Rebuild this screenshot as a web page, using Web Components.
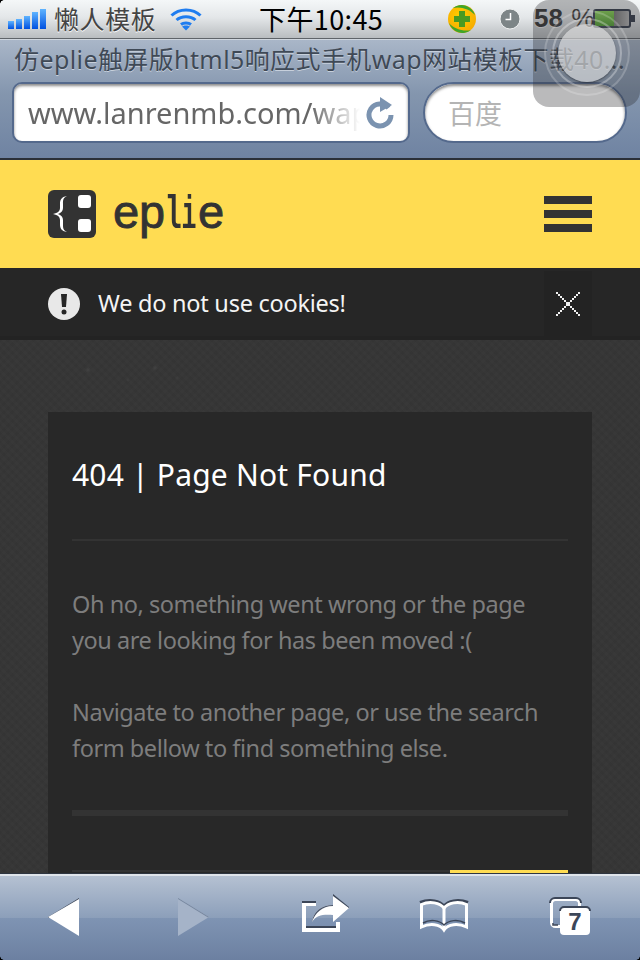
<!DOCTYPE html>
<html lang="zh"><head><meta charset="utf-8"><title>eplie</title>
<style>
html,body{margin:0;padding:0;background:#333}
body{font-family:"Noto Sans","Noto Sans CJK SC",sans-serif}
#phone{position:relative;width:640px;height:960px;overflow:hidden;display:flex;flex-direction:column}
</style></head><body>
<div id="phone">
<ios-status></ios-status>
<safari-bar page-title="仿eplie触屏版html5响应式手机wap网站模板下载40..." url="www.lanrenmb.com/wap" search="百度"></safari-bar>
<page-view>
  <site-header></site-header>
  <notice-bar>We do not use cookies!</notice-bar>
  <error-card heading="404 | Page Not Found">
    <p>Oh no, something went wrong or the page<br>you are looking for has been moved :(</p>
    <p>Navigate to another page, or use the search<br>form bellow to find something else.</p>
  </error-card>
</page-view>
<safari-toolbar></safari-toolbar>
<assistive-touch></assistive-touch>
</div>
<script>
function def(name,html){
  customElements.define(name,class extends HTMLElement{
    constructor(){super();const r=this.attachShadow({mode:'open'});r.innerHTML=html;}
    connectedCallback(){const r=this.shadowRoot;r.querySelectorAll('[data-attr]').forEach(e=>{e.textContent=this.getAttribute(e.dataset.attr)||''})}
  });
}
let xSquares='';
for(let i=0;i<12;i++){xSquares+=`M${i*2} ${i*2}h2v2h-2zM${22-i*2} ${i*2}h2v2h-2z`;}
def('ios-status',`<style>
:host{display:flex;align-items:center;height:39px;flex:none;position:relative;box-sizing:border-box;border-bottom:1px solid #5f6469;
background:linear-gradient(#f4f7f8,#e4e7e9 45%,#b9bdc0);font-family:"Noto Sans CJK SC",sans-serif}
:host::before{content:"";position:absolute;left:0;top:0;width:4px;height:4px;background:radial-gradient(circle at 100% 100%,transparent 3.500px,#000 4px)}
.sig{margin-left:8px;flex:none;display:block}
.car{margin-left:8px;font-size:25px;letter-spacing:.6px;color:#444;text-shadow:0 1px 0 #fff;line-height:35px;padding-bottom:2px;white-space:nowrap;width:108px}
.wifi{margin-left:8px;flex:none}
.time{margin-left:57px;font-size:27px;letter-spacing:.4px;color:#000;width:188px;white-space:nowrap;line-height:35px;padding-bottom:2px;font-family:"Noto Sans CJK SC",sans-serif}
.pct{font-family:"Liberation Sans",sans-serif;font-weight:700;font-size:26px;line-height:37px;padding-bottom:2px;color:#3c3c3c;text-shadow:0 1px 0 #eee;margin-left:13px;width:60px;white-space:nowrap}
.pct i{font-style:normal;font-weight:400;margin-left:1px}
svg{display:block;flex:none}
</style>
<svg class="sig" width="38" height="22" viewBox="0 0 38 22"><defs><linearGradient id="b" x1="0" y1="0" x2="0" y2="1"><stop offset="0" stop-color="#5fb4ff"/><stop offset="1" stop-color="#0050e0"/></linearGradient></defs>
<rect x="0" y="13" width="6" height="8" fill="url(#b)"/><rect x="8" y="11" width="6" height="10" fill="url(#b)"/><rect x="16" y="8" width="6" height="13" fill="url(#b)"/><rect x="24" y="4" width="6" height="17" fill="url(#b)"/><rect x="32" y="1" width="6" height="20" fill="url(#b)"/></svg>
<span class="car">懒人模板</span>
<svg class="wifi" width="32" height="24" viewBox="0 0 32 24" fill="none" stroke="#1f7df0" stroke-width="3"><path d="M1.500 8.500C9 1 23 1 30.500 8.500"/><path d="M6.500 13C11.500 8.500 20.500 8.500 25.500 13"/><path d="M11 17.500C13.500 15.500 18.500 15.500 21 17.500"/><path d="M16 23.500l-4-4c2-1.500 6-1.500 8 0z" fill="#1f7df0" stroke="none"/></svg>
<span class="time">下午10:45</span>
<svg width="30" height="30" viewBox="0 0 30 30"><defs><radialGradient id="y" cx=".45" cy=".4" r=".65"><stop offset="0" stop-color="#ffd000"/><stop offset="1" stop-color="#f6a800"/></radialGradient></defs><circle cx="15" cy="15" r="14" fill="url(#y)"/><path d="M2 19a14 14 0 0 0 22 7c-7 2-17-1-22-7z" fill="#3fa52a"/><path d="M28 11A14 14 0 0 0 6 4c7-2 17 1 22 7z" fill="#3fa52a"/><path d="M12 7h6v5h5v6h-5v5h-6v-5H7v-6h5z" fill="#4a9a22"/></svg>
<svg style="margin-left:22px;margin-bottom:1px" width="22" height="22" viewBox="0 0 22 22"><circle cx="11" cy="11" r="10" fill="#7d8587" stroke="#eef0f0" stroke-width="1"/><path d="M11.500 5v6.500H6.500" fill="none" stroke="#fff" stroke-width="1.500"/></svg>
<span class="pct">58<i> %</i></span>
<svg width="42" height="19" viewBox="0 0 42 19" style="margin-left:-1px;margin-bottom:2px"><defs><linearGradient id="g" x1="0" x2="0" y1="0" y2="1"><stop offset="0" stop-color="#8fd85c"/><stop offset="1" stop-color="#4d9c2f"/></linearGradient><linearGradient id="d" x1="0" x2="1" y1="0" y2="0"><stop offset="0" stop-color="#333"/><stop offset="1" stop-color="#bbb"/></linearGradient></defs><rect x="1" y="1" width="36" height="17" rx="2" fill="url(#d)" stroke="#3a4250" stroke-width="2"/><rect x="2" y="2" width="19" height="15" fill="url(#g)"/><rect x="38" y="6" width="4" height="7" fill="#3a4250"/></svg>`);
def('safari-bar',`<style>
:host{display:block;flex:none;height:121px;box-sizing:border-box;position:relative;border-top:1px solid #cfd6de;border-bottom:2px solid #2b3038;
background:linear-gradient(#a9b6c8,#8496ae 45%,#6f83a2);font-family:"Liberation Sans","Noto Sans CJK SC",sans-serif}
.title{height:42px;line-height:39px;padding:0 14px;color:#3f4956;text-shadow:0 1px 0 #c7d0dc;white-space:nowrap;overflow:hidden;font-family:"Noto Sans","Noto Sans CJK SC",sans-serif;font-size:25px;letter-spacing:.4px}
.row{display:flex;gap:13px;padding:0 12px;align-items:center}
.url,.search{box-sizing:border-box;height:61px;background:#fff;border:2px solid #54698c;box-shadow:inset 0 2px 3px #8a8a8a;display:flex;align-items:center;overflow:hidden;flex:none}
.url{width:398px;border-radius:10px;padding:0 12px 0 14px;position:relative}
.url span{font-family:"Noto Sans","DejaVu Sans",sans-serif;font-size:29px;color:#666;white-space:nowrap;width:332px;
-webkit-mask-image:linear-gradient(90deg,#000 85%,transparent 100%);mask-image:linear-gradient(90deg,#000 85%,transparent 100%)}
.url svg{margin-left:6px;flex:none}
.search{width:204px;border-radius:31px;padding-left:23px;font-family:"Noto Sans CJK SC",sans-serif;font-size:27px;color:#b4b4b4}
</style>
<div class="title" data-attr="page-title"></div>
<div class="row"><div class="url"><span data-attr="url"></span>
<svg width="28" height="32" viewBox="0 0 28 32" fill="none"><path d="M22.500 11A11 11 0 1 0 25 18" stroke="#7b93b0" stroke-width="5"/><path d="M14 0l12 8-12 7z" fill="#7b93b0"/></svg></div>
<div class="search" data-attr="search"></div></div>`);
def('page-view',`<style>
:host{display:block;flex:1;min-height:0;overflow:hidden;
background-color:#363636;
background-image:
 radial-gradient(circle 3px at 88px 30px,#434343,transparent),
 radial-gradient(circle 3px at 155px 28px,#424242,transparent),
 radial-gradient(circle 2px at 128px 40px,#3e3e3e,transparent),
 radial-gradient(circle 2px at 177px 38px,#3e3e3e,transparent),
 repeating-linear-gradient(45deg,rgba(255,255,255,.012) 0 3px,transparent 3px 6px),
 repeating-linear-gradient(-45deg,rgba(0,0,0,.03) 0 3px,transparent 3px 6px);
background-position:0 180px,0 180px,0 180px,0 180px,0 0,0 0;background-repeat:no-repeat,no-repeat,no-repeat,no-repeat,repeat,repeat}
</style><slot></slot>`);
def('site-header',`<style>
:host{display:flex;align-items:center;height:108px;padding:0 48px;background:#ffdc52}
.logo{display:flex;align-items:center;gap:16px;flex:1}
.word{display:flex;font-family:"Liberation Mono",monospace;font-size:47px;color:#333;-webkit-text-stroke:.9px #333;line-height:48px;white-space:nowrap;margin-top:3px}
.word b{display:block;font-weight:400}
.e1{width:26px;letter-spacing:-2.300px}.p{width:27px;letter-spacing:-1.300px}
.l{width:17px;transform:scaleX(.6);font-weight:700!important;-webkit-text-stroke:0;margin-left:-5.600px;margin-right:-5.600px;width:28.200px}
.i{transform:scaleX(.53);font-weight:700!important;-webkit-text-stroke:0;margin-left:-6.600px;margin-right:-6.600px;width:28.200px}
.e2{width:24px;letter-spacing:-4.300px}
.menu{display:flex;flex-direction:column;gap:6px;width:48px}
.menu i{display:block;height:8px;background:#333}
svg{display:block}
</style>
<div class="logo"><svg width="48" height="48" viewBox="0 0 48 48"><rect width="48" height="48" rx="6" fill="#333"/><rect x="30" y="5" width="13" height="13" rx="3" fill="#fff"/><rect x="30" y="29" width="13" height="13" rx="3" fill="#fff"/><path d="M19 6C13 7 12 10 12 14V18C12 21 10 23 5 24C10 25 12 27 12 30V34C12 38 13 41 19 42C15 40 15 38 15 34V30C15 27 13 25 10 24C13 23 15 21 15 18V14C15 10 15 8 19 6Z" fill="#fff"/></svg><span class="word"><b class="e1">e</b><b class="p">p</b><b class="l">l</b><b class="i">i</b><b class="e2">e</b></span></div>
<div class="menu"><i></i><i></i><i></i></div>`);
def('notice-bar',`<style>
:host{display:flex;align-items:center;height:72px;padding:0 48px;background:#262626;color:#f4f4f4;font-size:23.500px;letter-spacing:-.25px;font-family:"Noto Sans",sans-serif;box-sizing:border-box;border-bottom:4px solid #232323}
.txt{flex:1;margin-left:18px;white-space:nowrap;padding-top:2px}
.x{width:48px;height:66px;background:#232323;display:flex;align-items:center;justify-content:center;margin-top:4px}
svg{display:block;flex:none}
</style>
<svg width="32" height="32" viewBox="0 0 32 32" style="margin-top:4px"><circle cx="16" cy="16" r="16" fill="#e8e8e8"/><path d="M13 6h6l-1 13h-4z" fill="#262626"/><circle cx="16" cy="24" r="2.500" fill="#262626"/></svg>
<span class="txt"><slot></slot></span>
<div class="x"><svg width="24" height="24" viewBox="0 0 24 24" shape-rendering="crispEdges"><path d="${xSquares}" fill="#f0f0f0"/></svg></div>`);
def('error-card',`<style>
:host{display:block;margin:72px 48px 0;background:#282828;padding:43px 24px 0;height:600px;box-sizing:border-box;font-family:"Noto Sans",sans-serif}
h1{margin:0;font-size:30px;font-weight:400;letter-spacing:.2px;line-height:40px;color:#fff;white-space:nowrap}
.hr{height:2px;background:#333;margin:44px 0 45px}
::slotted(p){margin:0 0 36px;font-size:23.500px;letter-spacing:-.45px;line-height:36px;color:#7d7d7d;white-space:nowrap}
.rule{height:6px;background:#333;margin:44px 0 54px}
.form{display:flex;border-top:2px solid #333}
.form i{display:block;flex:1}
.form b{display:block;width:118px;height:3px;background:#ffdc52;margin-top:-2px}
</style>
<h1 data-attr="heading"></h1><div class="hr"></div><slot></slot><div class="rule"></div><div class="form"><i></i><b></b></div>`);
def('safari-toolbar',`<style>
:host{display:grid;grid-template-columns:128px 130px 134px 106px 142px;align-items:center;justify-items:center;height:87px;flex:none;box-sizing:border-box;
border-top:1px solid #2e3540;position:relative;
background:linear-gradient(#dfe4ea 0 2px,#b5c1d2 2px,#8c9fba 51%,#7f94b3 51%,#6c80a1);z-index:1}
:host::before,:host::after{content:"";position:absolute;bottom:0;width:4px;height:4px}
:host::before{left:0;background:radial-gradient(circle at 100% 0,transparent 3.500px,#000 4px)}
:host::after{right:0;background:radial-gradient(circle at 0 0,transparent 3.500px,#000 4px)}
svg{display:block}
.ic{align-self:start;margin-top:11px}
</style>
<svg width="34" height="40" viewBox="0 0 34 40"><path d="M1 20L32 1v2L1 21z" fill="#3c4658"/><path d="M1 20L32 2v37z" fill="#fff"/></svg>
<svg width="34" height="40" viewBox="0 0 34 40"><path d="M2 1l31 19L2 39z" fill="#a5b3c8"/><path d="M2 1l31 19-1 .5L2 2z" fill="#76869e"/></svg>
<svg class="ic" width="70" height="55" viewBox="0 0 70 55"><path d="M12 17H26V21H16V43H46V37H50V47H12Z" fill="#fff"/><path d="M12 16H26V18H12ZM16 41H46V43H16Z" fill="#3c4658"/><path d="M43 10L59 23L43 37V30C34 29 26 30 22 37C23 27 31 20 43 20Z" fill="#fff"/><path d="M43 9L59 22L59 23L43 11Z" fill="#3c4658"/><path d="M22 37C23 27 31 20 43 20L43 21C32 21 25 28 22 37Z" fill="#4a566b"/></svg>
<svg class="ic" width="70" height="55" viewBox="0 0 70 55" fill="none"><path d="M34 21C30 16 20 13.500 10 17.500" stroke="#3c4658" stroke-width="3"/><path d="M34 21C38 16 48 13.500 58 17.500" stroke="#3c4658" stroke-width="3"/><path d="M34 23C30 18 20 15.500 11.500 19.500V42C20 38 30 39 34 45C38 39 48 38 56.500 42V19.500C48 15.500 38 18 34 23Z" stroke="#fff" stroke-width="3"/><path d="M34 23V45" stroke="#fff" stroke-width="3"/><path d="M13 38C20 34 29 35 34 40C39 35 48 34 55 38" stroke="#3c4658" stroke-width="1.500"/></svg>
<div class="ic" style="position:relative;width:70px;height:55px;margin-left:12px;font-family:'Liberation Sans',sans-serif">
<svg width="70" height="55" viewBox="0 0 70 55"><rect x="11.500" y="14.500" width="28" height="27" rx="4" fill="none" stroke="#fff" stroke-width="3"/><path d="M10 18a5 5 0 0 1 5-5h21a5 5 0 0 1 5 5" fill="none" stroke="#3c4658" stroke-width="2"/><path d="M13 38v2h5" fill="none" stroke="#3c4658" stroke-width="1.500"/><rect x="20" y="22" width="30" height="28" rx="4" fill="#fff"/><path d="M20 26a4 4 0 0 1 4-4h22a4 4 0 0 1 4 4" fill="none" stroke="#3c4658" stroke-width="2"/></svg>
<span style="position:absolute;left:20px;top:22px;width:30px;height:28px;text-align:center;line-height:30px;font-size:24px;font-weight:700;color:#3c4658">7</span></div>`);
def('assistive-touch',`<style>
:host{position:absolute;left:533px;top:0;width:107px;height:107px;border-radius:16px;background:rgba(40,40,45,.32);z-index:5;display:block}
.c{position:absolute;border-radius:50%;box-sizing:border-box}
.a{left:11px;top:10px;width:86px;height:86px;border:2px solid rgba(255,255,255,.18);background:rgba(255,255,255,.04)}
.b{left:19px;top:18px;width:70px;height:70px;border:2px solid rgba(255,255,255,.3)}
.d{left:25px;top:24px;width:58px;height:58px;background:rgba(235,235,235,.58);box-shadow:0 1px 2px rgba(0,0,0,.4)}
</style><div class="c a"></div><div class="c b"></div><div class="c d"></div>`);
</script>
</body></html>
